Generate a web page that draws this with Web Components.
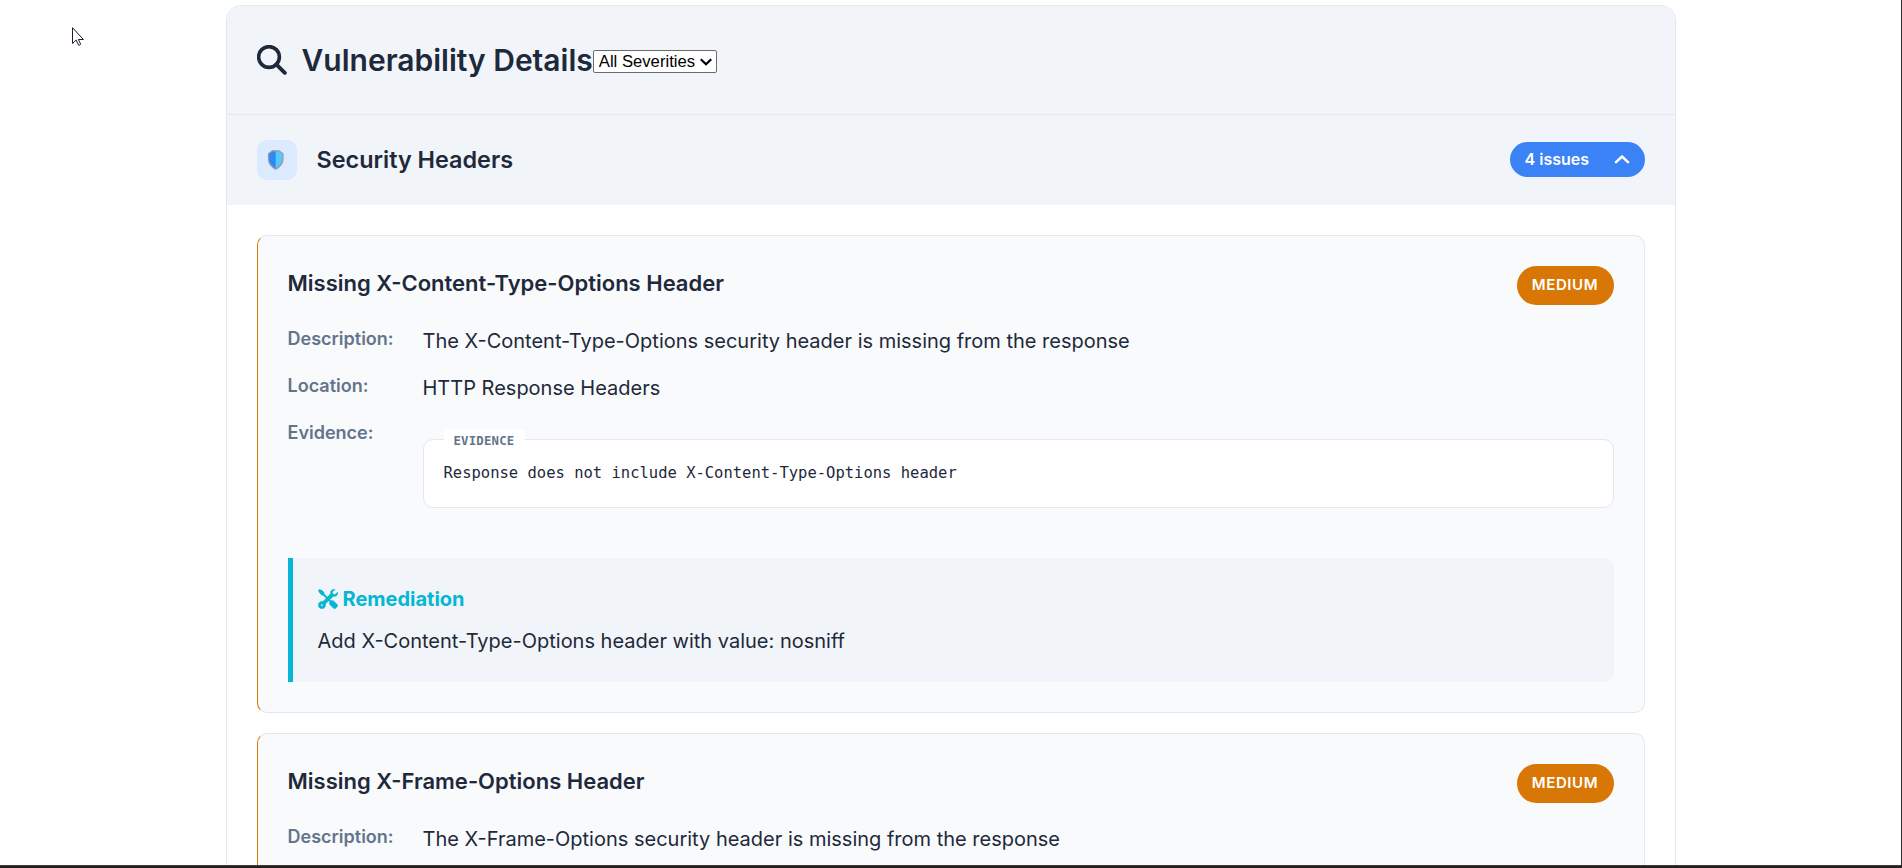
<!DOCTYPE html>
<html lang="en">
<head>
<meta charset="utf-8">
<title>Vulnerability Details</title>
<style>
html,body{margin:0;height:868px;overflow:hidden}
body{background:#fff;font-family:Inter,sans-serif;font-size:20px;line-height:1.6;color:#1e293b}
</style>
</head>
<body>
<report-page>
  <details-panel heading="Vulnerability Details">
    <issue-section heading="Security Headers" count="4 issues">
      <issue-card heading="Missing X-Content-Type-Options Header" severity="MEDIUM">
        <detail-row label="Description:">The X-Content-Type-Options security header is missing from the response</detail-row>
        <detail-row label="Location:">HTTP Response Headers</detail-row>
        <detail-row label="Evidence:"><evidence-box>Response does not include X-Content-Type-Options header</evidence-box></detail-row>
        <remediation-box>Add X-Content-Type-Options header with value: nosniff</remediation-box>
      </issue-card>
      <issue-card heading="Missing X-Frame-Options Header" severity="MEDIUM">
        <detail-row label="Description:">The X-Frame-Options security header is missing from the response</detail-row>
      </issue-card>
    </issue-section>
  </details-panel>
</report-page>
<script>
class Base extends HTMLElement {
  constructor() {
    super();
    this.attachShadow({ mode: 'open' });
  }
  connectedCallback() {
    this.shadowRoot.innerHTML = `<style>*{box-sizing:border-box}${this.css()}</style>${this.html()}`;
  }
}

customElements.define('report-page', class extends Base {
  css() {
    return `:host{display:block;box-sizing:border-box;position:relative;width:1902px;height:868px;overflow:hidden;padding:5px 0 0 225.5px;border-right:1px solid #2b2b2b}
    .edge{position:absolute;left:0;right:-1px;bottom:0;height:3px;background:#231f1e;border-top:1px solid #3f3c3a}
    .pointer{position:absolute;left:72px;top:27px}`;
  }
  html() {
    return `<slot></slot>
    <svg class="pointer" width="12" height="19" viewBox="0 0 12 19"><path d="M.5.7v15.800l3.600-3.400 2.600 5.100q1.300 0 2-1l-2.300-4.700h5z" fill="#fff" stroke="#1b1b2b" stroke-width="1"/></svg>
    <div class="edge"></div>`;
  }
});

customElements.define('details-panel', class extends Base {
  css() {
    return `:host{display:block;box-sizing:border-box;width:1450px;min-height:1200px;border:1px solid #e2e8f0;border-radius:15px;background:#fff;overflow:hidden}
    header{display:flex;align-items:center;height:109px;padding:30px;background:#f1f5f9;border-bottom:1px solid #e2e8f0}
    h2{margin:0;font-size:30px;font-weight:600;line-height:48px;white-space:nowrap}
    header>svg{width:30px;height:30px;margin-right:15px;flex:none}
    .pick{display:grid;align-items:center;width:124px;height:23px;margin-top:3px;background:#fff;border:1px solid #6b6b6b;border-radius:2px}
    select{grid-area:1/1;appearance:none;border:0;background:none;margin:0;padding:0 0 0 5px;color:#000;font:16.67px/21px "Liberation Sans",Arial,sans-serif;width:100%;height:21px}
    .pick svg{grid-area:1/1;justify-self:end;margin-right:4px}`;
  }
  html() {
    return `<header>
      <svg viewBox="0 0 30 30" fill="none" stroke="#1e293b"><circle cx="12" cy="12" r="10.400" stroke-width="3.600"/><path d="M19.300 19.300l8.500 8.500" stroke-width="3.900" stroke-linecap="round"/></svg>
      <h2>${this.getAttribute('heading')}</h2>
      <span class="pick"><select><option>All Severities</option></select>
      <svg width="12" height="8" viewBox="0 0 12 8" fill="none" stroke="#000" stroke-width="2.200"><path d="M.8 1.200L6 6.300l5.200-5.100"/></svg></span>
    </header><slot></slot>`;
  }
});

customElements.define('issue-section', class extends Base {
  css() {
    return `:host{display:block}
    .bar{display:flex;align-items:center;height:90px;padding:0 30px;background:#f1f5f9}
    .icon{display:flex;align-items:center;justify-content:center;width:40px;height:40px;margin-right:20px;padding-right:1px;border-radius:10px;background:#dbeafe}
    h3{margin:0;flex:1;font-size:23.400px;font-weight:600;line-height:38px}
    .pill{display:flex;align-items:center;justify-content:space-between;width:135px;height:35px;margin-bottom:1px;padding:0 15px;border-radius:18px;background:#3b82f6;color:#fff;font-size:16px;font-weight:600;line-height:25px}
    .list{display:flex;flex-direction:column;gap:20px;padding:30px}`;
  }
  html() {
    return `<div class="bar">
      <span class="icon"><svg width="18" height="22" viewBox="0 0 18 22"><path d="M5.200 1.800h7l3.800 3v5.600q-.4 6-7.300 9.800Q1.900 16.400 1.500 10.400V4.800z" fill="#58c8fc"/><path d="M5.200 1.800h3.500v18.400Q1.900 16.400 1.500 10.400V4.800z" fill="#2f8af0"/><path d="M5.200 1.800h7l3.800 3v5.600q-.4 6-7.300 9.800Q1.900 16.400 1.500 10.400V4.800z" fill="none" stroke="#9b9aab" stroke-width="1.200"/></svg></span>
      <h3>${this.getAttribute('heading')}</h3>
      <span class="pill"><span>${this.getAttribute('count')}</span>
      <svg width="16" height="10" viewBox="0 0 16 10" fill="none" stroke="#fff" stroke-width="2.500" stroke-linecap="round" stroke-linejoin="round"><path d="M2 7.200l6-5.700 6 5.700"/></svg></span>
    </div><div class="list"><slot></slot></div>`;
  }
});

customElements.define('issue-card', class extends Base {
  css() {
    return `:host{display:block;box-sizing:border-box;padding:30px;border:1px solid #e2e8f0;border-left-color:#d97706;border-radius:10px;background:#f8fafc}
    .top{display:flex;justify-content:space-between;align-items:flex-start;height:39px;margin-bottom:20px}
    h4{margin:0;font-size:22px;font-weight:600;line-height:35px}
    .badge{width:97px;height:39px;border-radius:20px;background:#d97706;color:#fff;font-size:15px;font-weight:600;line-height:38px;text-align:center;letter-spacing:.6px}
    .rows{display:flex;flex-direction:column;gap:15px}`;
  }
  html() {
    return `<div class="top"><h4>${this.getAttribute('heading')}</h4><span class="badge">${this.getAttribute('severity')}</span></div>
    <div class="rows"><slot></slot></div>`;
  }
});

customElements.define('detail-row', class extends Base {
  css() {
    return `:host{display:grid;grid-template-columns:135px 1fr;min-height:32px}
    b{font-size:18px;font-weight:600;line-height:28.800px;color:#64748b}`;
  }
  html() {
    return `<b>${this.getAttribute('label')}</b><div><slot></slot></div>`;
  }
});

customElements.define('evidence-box', class extends Base {
  css() {
    return `:host{display:block;box-sizing:border-box;position:relative;height:69px;margin:20px 0 5px;padding:20px;border:1px solid #e2e8f0;border-radius:10px;background:#fff;font:15.500px/27px "DejaVu Sans Mono",monospace;white-space:pre}
    .tag{position:absolute;left:20px;top:-10px;width:81px;padding-left:10px;background:#fff;color:#64748b;font-size:12.300px;font-weight:600;line-height:22px;letter-spacing:.22px}`;
  }
  html() {
    return `<span class="tag">EVIDENCE</span><slot></slot>`;
  }
});

customElements.define('remediation-box', class extends Base {
  css() {
    return `:host{display:block;box-sizing:border-box;height:124px;margin-top:30px;padding:25px;border-left:5px solid #06b6d4;border-radius:0 10px 10px 0;background:#f1f5f9}
    .head{display:flex;align-items:center;gap:5px;margin-bottom:10px;height:32px;color:#06b6d4;font-weight:700}`;
  }
  html() {
    return `<div class="head"><svg width="20" height="20" viewBox="-.2 -.2 16.400 16.400" fill="currentColor" stroke="currentColor" stroke-width=".4"><path d="M1 0 0 1l2.200 3.081a1 1 0 0 0 .815.419h.07a1 1 0 0 1 .708.293l2.675 2.675-2.617 2.654A3.003 3.003 0 0 0 0 13a3 3 0 1 0 5.878-.851l2.654-2.617.968.968-.305.914a1 1 0 0 0 .242 1.023l3.270 3.270a.997.997 0 0 0 1.414 0l1.586-1.586a.997.997 0 0 0 0-1.414l-3.270-3.270a1 1 0 0 0-1.023-.242L10.500 9.500l-.96-.96 2.680-2.643A3.005 3.005 0 0 0 16 3q0-.405-.102-.777l-2.140 2.141L12 4l-.364-1.757L13.777.102a3 3 0 0 0-3.675 3.680L7.462 6.460 4.793 3.793a1 1 0 0 1-.293-.707v-.071a1 1 0 0 0-.419-.814z"/><path d="M.6 1.600Q1.500.3 3 .8l1.500 1.600.4 1.800-1.500.7-2-1.700zM10.200 11l1.300-.6 3.600 3.500-1.300 1.400z"/><circle cx="3" cy="13" r=".7" fill="#f1f5f9" stroke="none"/></svg><span>Remediation</span></div><slot></slot>`;
  }
});
</script>
</body>
</html>
